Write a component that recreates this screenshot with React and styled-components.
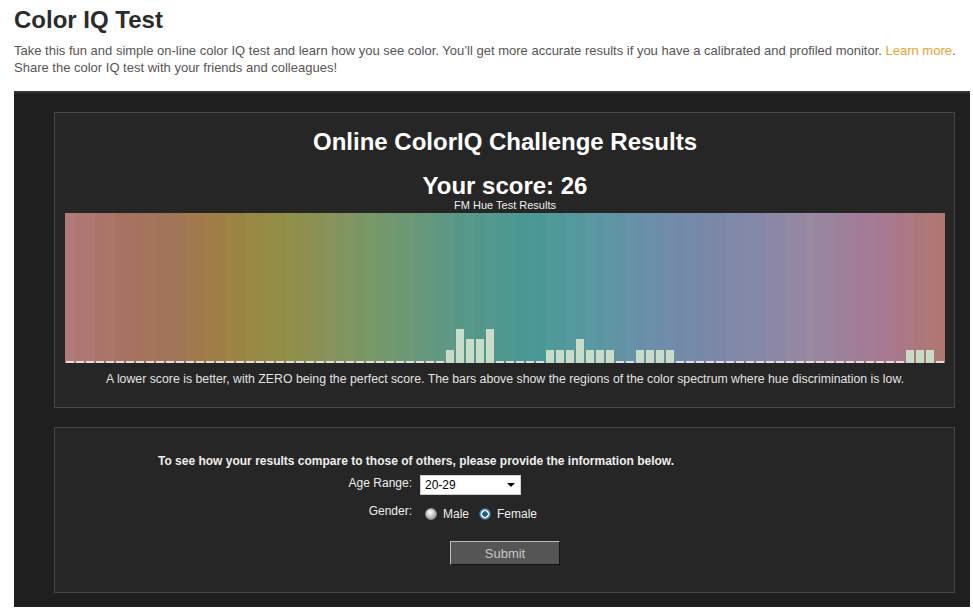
import React from 'react';
import styled, { createGlobalStyle } from 'styled-components';

const GlobalStyle = createGlobalStyle`
  html, body {
    margin: 0;
    padding: 0;
    background: #ffffff;
    font-family: 'Liberation Sans', Arial, sans-serif;
  }
`;

const Page = styled.div`
  padding: 6px 3px 0 14px;
`;

const Title = styled.h1`
  margin: 0;
  font-size: 24px;
  line-height: 28px;
  font-weight: bold;
  color: #2b2b2b;
`;

const Intro = styled.p`
  margin: 8px 0 15px;
  font-size: 13px;
  line-height: 17px;
  color: #555555;
`;

const Link = styled.a`
  color: #e8a332;
  text-decoration: none;
`;

const DarkPanel = styled.div`
  background: #1f1f1f;
  border-top: 2px solid #363636;
  padding: 19px 15px 14px 40px;
  display: flex;
  flex-direction: column;
  gap: 19px;
`;

const Box = styled.div`
  background: #262626;
  border: 1px solid #464646;
  height: ${(p) => p.$h}px;
  box-sizing: border-box;
`;

const ResultsBox = styled(Box)`
  padding: 15px 9px 0 10px;
  display: flex;
  flex-direction: column;
  align-items: center;
  color: #ffffff;
`;

const Heading = styled.h2`
  margin: 0;
  font-size: 24px;
  line-height: 28px;
  font-weight: bold;
`;

const Score = styled.div`
  margin-top: 17px;
  font-size: 24px;
  line-height: 26px;
  font-weight: bold;
`;

const SubLabel = styled.div`
  font-size: 11px;
  line-height: 12px;
  color: #f0f0f0;
`;

const Chart = styled.div`
  margin-top: 2px;
  align-self: stretch;
  height: 150px;
  display: flex;
`;

const Stripe = styled.div`
  width: 10px;
  flex: 0 0 10px;
  display: flex;
  align-items: flex-end;
`;

const Bar = styled.div`
  width: 8px;
  margin-left: 1px;
  height: ${(p) => p.$h}px;
  background: ${(p) => (p.$h > 2 ? '#c9dcc7' : '#e2dcdc')};
`;

const Caption = styled.p`
  margin: 9px 0 0;
  font-size: 12.3px;
  line-height: 14px;
  color: #e2e2e2;
`;

const FormBox = styled(Box)`
  padding: 26px 0 0 103px;
`;

const FormGrid = styled.div`
  display: grid;
  grid-template-columns: 254px auto;
  column-gap: 8px;
  row-gap: 0;
  color: #eeeeee;
  font-size: 12px;
`;

const FormIntro = styled.div`
  grid-column: 1 / span 2;
  font-weight: bold;
  line-height: 14px;
  margin-bottom: 7px;
`;

const Label = styled.div`
  text-align: right;
  line-height: 14px;
  padding-top: 1px;
`;

const Field = styled.div`
  display: flex;
  align-items: center;
  margin-bottom: ${(p) => p.$mb || 0}px;
`;

const SelectWrap = styled.div`
  position: relative;
  width: 101px;
  height: 20px;
`;

const Select = styled.select`
  appearance: none;
  width: 101px;
  height: 20px;
  margin: 0;
  padding: 0 0 0 4px;
  border: 1px solid #cfcfcf;
  border-radius: 0;
  background: #ffffff;
  color: #000;
  font-family: 'Liberation Sans', Arial, sans-serif;
  font-size: 12px;
  outline: none;
`;

const Caret = styled.span`
  position: absolute;
  right: 6px;
  top: 8px;
  width: 0;
  height: 0;
  border-left: 4px solid transparent;
  border-right: 4px solid transparent;
  border-top: 4px solid #000;
  pointer-events: none;
`;

const RadioGroup = styled.label`
  display: inline-flex;
  align-items: center;
  margin-left: ${(p) => p.$ml}px;
  font-size: 12px;
  color: #eeeeee;
  padding-top: 4px;
`;

const RadioDot = styled.span`
  width: 12px;
  height: 12px;
  border-radius: 50%;
  box-sizing: border-box;
  margin-right: 6px;
  background: ${(p) =>
    p.$checked
      ? 'radial-gradient(circle at 50% 50%, #1d5f8f 0 2.5px, #ffffff 3px 3.5px, #8fb7d8 4px, #5a7e9c 6px)'
      : 'radial-gradient(circle at 40% 35%, #ffffff 0, #d8d8d8 3px, #a9a9a9 6px)'};
  border: 1px solid ${(p) => (p.$checked ? '#3c5e7a' : '#8a8a8a')};
`;

const SubmitButton = styled.button`
  margin: 20px 0 0 30px;
  width: 110px;
  height: 24px;
  background: #555555;
  color: #c8c8c8;
  font-family: 'Liberation Sans', Arial, sans-serif;
  font-size: 13px;
  border-top: 1px solid #bcbcbc;
  border-left: 1px solid #bcbcbc;
  border-right: 1px solid #111;
  border-bottom: 1px solid #111;
  padding: 0;
`;

const stops = [
  [0, '#b27a7a'], [5, '#a87262'], [10, '#a07458'], [14, '#a27c48'],
  [18, '#988844'], [22, '#909048'], [26, '#88925c'], [30, '#789868'],
  [34, '#6c9878'], [39, '#589888'], [46, '#4a9896'], [52, '#5898a0'],
  [57, '#6890a8'], [63, '#7888a8'], [69, '#8688a8'], [74, '#9888a0'],
  [79, '#a27c98'], [83, '#aa7888'], [87, '#b07870'],
];

const hex = (c) => [1, 3, 5].map((i) => parseInt(c.slice(i, i + 2), 16));

const stripeColor = (i) => {
  let k = 0;
  while (k < stops.length - 2 && stops[k + 1][0] < i) k++;
  const [a, ca] = stops[k];
  const [b, cb] = stops[k + 1];
  const t = Math.min(1, Math.max(0, (i - a) / (b - a)));
  const A = hex(ca);
  const B = hex(cb);
  const shade = i % 2 === 0 ? 1 : -1;
  const rgb = A.map((v, j) => Math.round(v + (B[j] - v) * t + shade));
  return `rgb(${rgb.join(',')})`;
};

const levels = {
  38: 1, 39: 3, 40: 2, 41: 2, 42: 3,
  48: 1, 49: 1, 50: 1, 51: 2, 52: 1, 53: 1, 54: 1,
  57: 1, 58: 1, 59: 1, 60: 1,
  84: 1, 85: 1, 86: 1,
};
const heights = [2, 13, 24, 34];

const App = () => {
  const stripes = Array.from({ length: 88 }, (_, i) => i);
  return (
    <>
      <GlobalStyle />
      <Page>
        <Title>Color IQ Test</Title>
        <Intro>
          Take this fun and simple on-line color IQ test and learn how you see color. You’ll get more accurate
          results if you have a calibrated and profiled monitor. <Link href="#">Learn more</Link>.
          <br />
          Share the color IQ test with your friends and colleagues!
        </Intro>
        <DarkPanel>
          <ResultsBox $h={296}>
            <Heading>Online ColorIQ Challenge Results</Heading>
            <Score>Your score: 26</Score>
            <SubLabel>FM Hue Test Results</SubLabel>
            <Chart>
              {stripes.map((i) => (
                <Stripe key={i} style={{ background: stripeColor(i) }}>
                  <Bar $h={heights[levels[i] || 0]} />
                </Stripe>
              ))}
            </Chart>
            <Caption>
              A lower score is better, with ZERO being the perfect score. The bars above show the regions of the
              color spectrum where hue discrimination is low.
            </Caption>
          </ResultsBox>
          <FormBox $h={166}>
            <FormGrid>
              <FormIntro>To see how your results compare to those of others, please provide the information below.</FormIntro>
              <Label>Age Range:</Label>
              <Field $mb={8}>
                <SelectWrap>
                  <Select defaultValue="20-29">
                    <option>Under 20</option>
                    <option>20-29</option>
                    <option>30-39</option>
                    <option>40-49</option>
                    <option>50-59</option>
                    <option>60+</option>
                  </Select>
                  <Caret />
                </SelectWrap>
              </Field>
              <Label>Gender:</Label>
              <Field>
                <RadioGroup $ml={5}>
                  <RadioDot />
                  Male
                </RadioGroup>
                <RadioGroup $ml={10}>
                  <RadioDot $checked />
                  Female
                </RadioGroup>
              </Field>
              <div />
              <div>
                <SubmitButton>Submit</SubmitButton>
              </div>
            </FormGrid>
          </FormBox>
        </DarkPanel>
      </Page>
    </>
  );
};

export default App;
